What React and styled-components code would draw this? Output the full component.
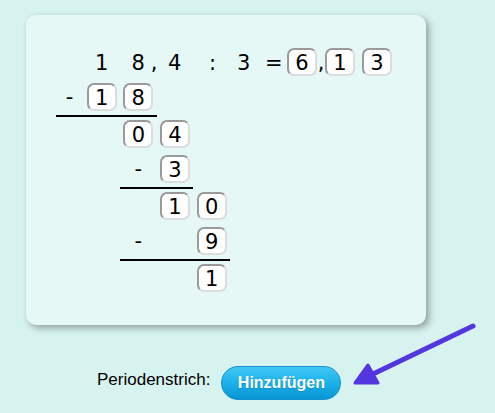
import React from "react";
import styled, { createGlobalStyle } from "styled-components";

//one column of the written division, in px
const PITCH = 110 / 3;

const GlobalStyle = createGlobalStyle`
    html, body {
        margin: 0;
        padding: 0;
        background: #d7f3ef;
    }
    body {
        font-family: "Liberation Sans", Arial, sans-serif;
    }
`;

const Page = styled.div`
    position: relative;
    width: 495px;
    height: 413px;
    box-sizing: border-box;
    padding: 15px 0 0 26px;
    overflow: hidden;
`;

const Card = styled.div`
    width: 400px;
    height: 310px;
    box-sizing: border-box;
    padding: 33px 0 0 20.67px;
    background: #e6f8f6;
    border-radius: 10px;
    box-shadow: 3px 3px 7px rgba(0, 0, 0, 0.35);
    font-family: "DejaVu Sans", Verdana, sans-serif;
    font-size: 21px;
    color: #000;
`;

const Sheet = styled.div`
    display: flex;
    flex-direction: column;
    align-items: flex-start;
`;

const TopRow = styled.div`
    display: flex;
    height: 28px;
    margin: 0 0 7px 48.33px;
`;

/*loose glyph of the task line, centred in a narrow slot*/
const Glyph = styled.span`
    display: inline-block;
    width: ${props => props.$w || 12}px;
    margin-left: ${props => props.$ml || 0}px;
    text-align: center;
    line-height: 30px;
`;

const Row = styled.div`
    display: flex;
    margin-left: ${props => props.$x}px;
    padding-bottom: ${props => props.$ruled ? 4 : 0}px;
    margin-bottom: ${props => props.$ruled ? 3 : 7}px;
    border-bottom: ${props => props.$ruled ? '2px solid #000' : 'none'};
`;

const Slot = styled.div`
    display: flex;
    justify-content: center;
    width: ${props => props.$w || PITCH}px;
    height: 28px;
    line-height: 29px;
`;

const Box = styled.div`
    width: 30px;
    height: 28px;
    box-sizing: border-box;
    margin-left: ${props => props.$ml || 0}px;
    border: 2px solid;
    border-color: #9a9a9a #dcdcdc #dcdcdc #9a9a9a;
    border-radius: 7px;
    background: #fff;
    text-align: center;
    line-height: 27px;
`;

const Footer = styled.div`
    display: flex;
    align-items: flex-start;
    margin: 41px 0 0 71px;
`;

const Label = styled.span`
    margin-top: 4px;
    font-size: 17px;
    color: #000;
`;

const AddButton = styled.button`
    width: 120px;
    height: 34px;
    margin-left: 11px;
    padding: 0;
    border: 1px solid #1a8fcf;
    border-radius: 17px;
    background: linear-gradient(to bottom, #40c8f4 0%, #1cb0e8 50%, #0796d5 100%);
    color: #fff;
    font-family: "Liberation Sans", Arial, sans-serif;
    font-weight: bold;
    font-size: 16px;
    text-shadow: 0 1px 1px rgba(0, 0, 0, 0.15);
    cursor: pointer;
`;

const Arrow = styled.svg`
    position: absolute;
    left: 340px;
    top: 315px;
`;

//steps below the task line: x offset from column 0, cells left to right
const STEPS = [
    { x: 9.33, cells: ['-', '1', '8'], lead: PITCH - 9.33, ruled: true },
    { x: PITCH * 2, cells: ['0', '4'] },
    { x: PITCH * 2, cells: ['-', '3'], ruled: true },
    { x: PITCH * 3, cells: ['1', '0'] },
    { x: PITCH * 2, cells: ['-', '', '9'], ruled: true },
    { x: PITCH * 4, cells: ['1'] },
];

const renderCell = (cell, i, lead) => {
    if (cell === '-') return <Slot key={i} $w={lead}>-</Slot>;
    if (cell === '') return <Slot key={i} />;
    return <Slot key={i}><Box>{cell}</Box></Slot>;
};

export default function App() {
    return (
        <Page>
            <GlobalStyle />
            <Card>
                <Sheet>
                    <TopRow>
                        <Glyph>1</Glyph>
                        <Glyph $ml={24.5}>8</Glyph>
                        <Glyph $ml={4.5}>,</Glyph>
                        <Glyph $ml={8}>4</Glyph>
                        <Glyph $ml={26.5}>:</Glyph>
                        <Glyph $ml={18.5}>3</Glyph>
                        <Glyph $ml={16}>=</Glyph>
                        <Box $ml={10}>6</Box>
                        <Glyph $w={8}>,</Glyph>
                        <Box>1</Box>
                        <Box $ml={7}>3</Box>
                    </TopRow>
                    {STEPS.map((step, r) => (
                        <Row key={r} $x={step.x} $ruled={step.ruled}>
                            {step.cells.map((cell, i) => renderCell(cell, i, step.lead))}
                        </Row>
                    ))}
                </Sheet>
            </Card>
            <Footer>
                <Label>Periodenstrich:</Label>
                <AddButton>Hinzufügen</AddButton>
            </Footer>
            <Arrow width="150" height="80" viewBox="0 0 150 80">
                <line x1="133" y1="11" x2="33" y2="59" stroke="#5236df" strokeWidth="5" strokeLinecap="round" />
                <polygon points="15,68 28,50 38,68" fill="#5236df" stroke="#5236df" strokeWidth="3" strokeLinejoin="round" />
            </Arrow>
        </Page>
    );
}
